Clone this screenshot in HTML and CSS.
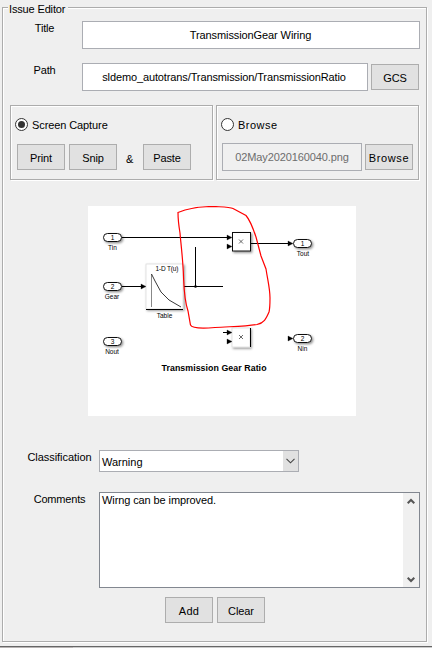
FILE: index.html
```html
<!DOCTYPE html>
<html lang="en">
<head>
<meta charset="utf-8">
<title>Issue Editor</title>
<link rel="stylesheet" href="styles.css">
</head>
<body>
<main class="editor etched">
  <h1 class="legend">Issue Editor</h1>

  <div class="row row-title">
    <label class="label tight">Title</label>
    <div class="field">TransmissionGear Wiring</div>
  </div>

  <div class="row row-path">
    <label class="label tight">Path</label>
    <div class="field">sldemo_autotrans/Transmission/TransmissionRatio</div>
    <button class="btn gcs">GCS</button>
  </div>

  <div class="sources">
    <section class="source etched">
      <div class="choice"><span class="radio checked"></span>Screen Capture</div>
      <div class="actions">
        <button class="btn">Print</button>
        <button class="btn">Snip</button>
        <span class="amp">&amp;</span>
        <button class="btn">Paste</button>
      </div>
    </section>
    <section class="source etched">
      <div class="choice wide"><span class="radio"></span>Browse</div>
      <div class="actions browse">
        <div class="field disabled">02May2020160040.png</div>
        <button class="btn wide">Browse</button>
      </div>
    </section>
  </div>

  <svg class="capture" width="268" height="210" viewBox="88 206 268 210">
    <defs>
      <filter id="shadow" x="-20%" y="-20%" width="150%" height="150%">
        <feDropShadow dx="1.3" dy="1.3" stdDeviation="0.8" flood-color="#000" flood-opacity="0.45"/>
      </filter>
    </defs>
    <rect x="88" y="206" width="268" height="210" fill="#fff"/>
    <g fill="#fff" stroke="#111" stroke-width="1" filter="url(#shadow)">
      <rect x="103.500" y="233.500" width="18" height="8" rx="4"/>
      <rect x="103.500" y="282.500" width="18" height="8" rx="4"/>
      <rect x="103.500" y="337.500" width="18" height="8" rx="4"/>
      <rect x="293.500" y="239.500" width="18" height="8" rx="4"/>
      <rect x="293.500" y="334.500" width="18" height="8" rx="4"/>
      <rect x="232.500" y="232.500" width="18" height="18.500"/>
    </g>
    <rect x="146" y="264" width="37" height="45" fill="#fff" stroke="#ddd" stroke-width=".8" filter="url(#shadow)"/>
    <rect x="232" y="328" width="18" height="19" fill="#fff" stroke="#ddd" stroke-width=".8" filter="url(#shadow)"/>
    <g fill="none" stroke="#000">
      <path d="M146 309.500H183M250.500 328V347"/>
      <path d="M122 237.500H228M122 286.500H142M184 286.500H223M195.500 247V287M251 243.500H289M223 332.500H228"/>
      <path d="M151.500 274V307" stroke="#888"/>
      <path d="M151.500 274L155 281L161 292L169 300L181 307" stroke="#222" stroke-width=".9"/>
      <path d="M239 239.500l4 4m0-4l-4 4M239 335l4 4m0-4l-4 4" stroke="#444" stroke-width=".8"/>
    </g>
    <path d="M227 235l5 2.500l-5 2.500zM227 244l5 2.500l-5 2.500zM141 284l5 2.500l-5 2.500zM288 241l5 2.500l-5 2.500zM227 330l5 2.500l-5 2.500zM227 339l5 2.500l-5 2.500zM288 336l5 2.500l-5 2.500z" fill="#000" stroke="#000" stroke-width=".3"/>
    <circle cx="195.500" cy="286.500" r="1.300"/>
    <g class="tiny">
      <text x="112.500" y="240">1</text>
      <text x="112.500" y="289">2</text>
      <text x="112.500" y="344">3</text>
      <text x="302.500" y="246">1</text>
      <text x="302.500" y="341">2</text>
      <text x="112.500" y="250">Tin</text>
      <text x="112" y="299">Gear</text>
      <text x="112" y="354">Nout</text>
      <text x="303" y="256">Tout</text>
      <text x="302.500" y="351">Nin</text>
      <text x="167" y="271" textLength="23">1-D T(u)</text>
      <text x="164.500" y="317.500">Table</text>
    </g>
    <text class="caption" x="161.500" y="371" textLength="105">Transmission Gear Ratio</text>
    <path class="markup" d="M178 212.500L185 210C196 207 204 206.500 214 206.500C223 207 230 207 233 208.500L246 215.500C249 219 252 225 256 237L261 256L266 269C268 282 270 289 270 298C270 307 269.500 310 269 312C266 319 264 323 257 324.500C246 326.500 230 326.500 215 327.500C203 328.500 192 328.500 190.500 325L188 311C184 299 184 288 183.500 276C183 260 180.500 240 180 233C178.500 224 178 218 178 212.500Z"/>
  </svg>

  <div class="row row-class">
    <label class="label side">Classification</label>
    <div class="select">
      <span class="value">Warning</span>
      <span class="drop"><svg width="9" height="6" viewBox="0 0 9 6"><path d="M.5 .8L4.500 4.800L8.500 .8" fill="none" stroke="#444" stroke-width="1.100"/></svg></span>
    </div>
  </div>

  <div class="row row-comments">
    <label class="label side tight">Comments</label>
    <div class="area">
      <div class="text">Wirng can be improved.</div>
      <div class="scroll">
        <svg width="8" height="7" viewBox="0 0 8 7"><path d="M.7 5.300L4 2L7.300 5.300" fill="none" stroke="#555" stroke-width="2"/></svg>
        <svg width="8" height="7" viewBox="0 0 8 7"><path d="M.7 1.700L4 5L7.300 1.700" fill="none" stroke="#555" stroke-width="2"/></svg>
      </div>
    </div>
  </div>

  <div class="submit">
    <button class="btn add">Add</button>
    <button class="btn">Clear</button>
  </div>
</main>
<footer class="edge"><span></span></footer>
</body>
</html>
```
FILE: styles.css
```css
* { box-sizing: border-box; }

body {
  margin: 0;
  width: 432px;
  height: 648px;
  overflow: hidden;
  padding: 7px 0 0 2px;
  background: #efefef;
  color: #000;
  font: 11px/14px "Liberation Sans", Arial, sans-serif;
  letter-spacing: -0.1px;
}

.etched {
  border: 1px solid #acacac;
  box-shadow: 1px 1px 0 #fff, inset 1px 1px 0 #fff;
}

.editor {
  display: flex;
  flex-direction: column;
  width: 425px;
  height: 635px;
}

.legend {
  align-self: flex-start;
  height: 14px;
  margin: -6px 0 0 5px;
  padding: 0 3px 0 1px;
  background: #efefef;
  font-size: 11px;
  font-weight: normal;
  line-height: 14px;
  letter-spacing: -0.15px;
}

.row { display: flex; flex: none; }
.row-title { height: 28px; margin-top: 5px; }
.row-path { height: 28px; margin-top: 14px; }

.label {
  width: 79px;
  padding-left: 4px;
  text-align: center;
}

.tight { letter-spacing: -0.2px; }

.field {
  height: 28px;
  border: 1px solid #abadb3;
  background: #fff;
  line-height: 27px;
  text-align: center;
  white-space: nowrap;
}

.row-title .field {
  width: 338px;
  padding-right: 1px;
}

.row-path .field {
  width: 286px;
  padding-right: 2px;
  letter-spacing: -0.12px;
}

.btn {
  width: 48px;
  height: 26px;
  padding: 0;
  border: 1px solid #adadad;
  background: #e1e1e1;
  color: #000;
  font: inherit;
  letter-spacing: -0.1px;
  line-height: 26px;
  text-align: center;
}

.gcs { margin: 1px 0 0 3px; }
.wide { letter-spacing: 0.5px; }
.btn.wide { letter-spacing: 0.6px; }
.btn.add { letter-spacing: 0.3px; }

.sources {
  display: flex;
  flex: none;
  gap: 3px;
  margin: 14px 0 0 7px;
}

.source {
  width: 203px;
  height: 75px;
  padding: 12px 0 0 4px;
}

.choice {
  display: flex;
  gap: 4px;
  height: 13px;
  line-height: 14px;
}

.radio {
  display: grid;
  place-items: center;
  width: 13px;
  height: 13px;
  border: 1px solid #333;
  border-radius: 50%;
  background: #fff;
}

.radio.checked::after {
  content: "";
  width: 7px;
  height: 7px;
  border-radius: 50%;
  background: #333;
}

.actions {
  display: flex;
  gap: 4px;
  margin: 13px 0 0 2px;
}

.actions.browse { margin: 12px 0 0 1px; gap: 3px; }
.browse .btn { margin-top: 1px; }

.amp {
  width: 18px;
  padding-right: 1px;
  line-height: 31px;
  text-align: center;
}

.disabled {
  width: 140px;
  background: #f0f0f0;
  color: #6d6d6d;
}

.capture {
  flex: none;
  display: block;
  margin: 26px 0 0 85px;
}

.tiny {
  font: 6.500px "Liberation Sans", Arial, sans-serif;
  letter-spacing: 0;
  text-anchor: middle;
}

.tiny text[textLength] { text-anchor: middle; }

.caption {
  font: bold 8.800px "Liberation Sans", Arial, sans-serif;
  letter-spacing: 0;
}

.markup {
  fill: none;
  stroke: #f00;
  stroke-width: 1.200;
}

.row-class { height: 22px; margin-top: 34px; }
.row-comments { height: 96px; margin-top: 20px; }

.side {
  width: 96px;
  padding-left: 17px;
}

.row-class .label { letter-spacing: -0.05px; }

.select {
  display: flex;
  width: 200px;
  border: 1px solid #abadb3;
  background: #fff;
}

.value {
  flex: 1;
  padding-left: 2px;
  line-height: 23px;
  letter-spacing: 0;
}

.drop {
  display: grid;
  place-items: center;
  width: 15px;
  background: #e1e1e1;
}

.area {
  display: flex;
  width: 321px;
  border: 1px solid #828790;
  background: #fff;
}

.text { flex: 1; padding-left: 2px; }

.scroll {
  display: flex;
  flex-direction: column;
  align-items: center;
  justify-content: space-between;
  width: 16px;
  padding: 5px 1px 4px 0;
  background: #f0f0f0;
}

.submit {
  display: flex;
  gap: 4px;
  margin: 9px 0 0 162px;
}

.edge {
  height: 2px;
  margin: 4px 0 0 -2px;
  border-top: 1px solid #666;
  background: #ccc;
}

.edge span {
  display: block;
  width: 73px;
  height: 1px;
  background: #b8b4b4;
}
```
